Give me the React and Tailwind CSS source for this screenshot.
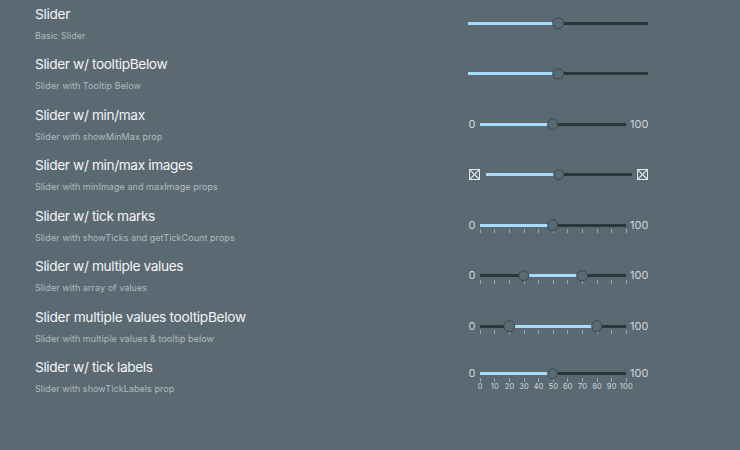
import React from "react";

const TICKS = [0, 10, 20, 30, 40, 50, 60, 70, 80, 90, 100];

const ROWS = [
  { title: "Slider", note: "Basic Slider", values: [50] },
  { title: "Slider w/ tooltipBelow", note: "Slider with Tooltip Below", values: [50], tight: true },
  { title: "Slider w/ min/max", note: "Slider with showMinMax prop", values: [50], ends: "text", tight: true },
  { title: "Slider w/ min/max images", note: "Slider with minImage and maxImage props", values: [50], ends: "image", tight: true },
  { title: "Slider w/ tick marks", note: "Slider with showTicks and getTickCount props", values: [50], ends: "text", ticks: true, tight: true },
  { title: "Slider w/ multiple values", note: "Slider with array of values", values: [30, 70], ends: "text", ticks: true, tight: true },
  { title: "Slider multiple values tooltipBelow", note: "Slider with multiple values & tooltip below", values: [20, 80], ends: "text", ticks: true },
  { title: "Slider w/ tick labels", note: "Slider with showTickLabels prop", values: [50], ends: "text", ticks: true, labels: true, tight: true },
];

function BoxIcon() {
  return (
    <svg className="block h-[11px] w-[11px] shrink-0" viewBox="0 0 11 11" fill="none" stroke="#e3e6e8" strokeWidth="1.1">
      <rect x="0.5" y="0.5" width="10" height="10" />
      <path d="M1 1 10 10M10 1 1 10" />
    </svg>
  );
}

function Track({ values, ticks, labels }) {
  const start = values.length > 1 ? values[0] : 0;
  const end = values[values.length - 1];
  return (
    <div className="relative h-[3px] min-w-0 flex-1 bg-[#2b363b]">
      <div className="h-full bg-[#a5dcfd]" style={{ marginLeft: `${start}%`, width: `${end - start}%` }} />
      {ticks &&
        TICKS.map((t) => (
          <div key={t} className="absolute top-[5.4px] ml-[0.4px] flex w-5 -translate-x-1/2 flex-col items-center" style={{ left: `${t}%` }}>
            <span className="h-[4px] w-px bg-[#9ea6ab]" />
            {labels && <span className="text-[7.5px] leading-[9px] tracking-[0.15px] text-[#d4d7da]">{t}</span>}
          </div>
        ))}
      {values.map((v) => (
        <span
          key={v}
          className="absolute top-1/2 h-[11.5px] w-[11.5px] -translate-x-1/2 -translate-y-1/2 rounded-full border border-[#3a464e] bg-[#5b6973]"
          style={{ left: `${v}%` }}
        />
      ))}
    </div>
  );
}

function Slider({ values, ends, ticks, labels }) {
  return (
    <div className="flex w-[180px] items-center text-[11px] leading-none text-[#d2d5d8]">
      {ends === "text" && <span className="w-[11.5px]">0</span>}
      {ends === "image" && <span className="w-[17.2px] pl-[0.5px]"><BoxIcon /></span>}
      <Track values={values} ticks={ticks} labels={labels} />
      {ends === "text" && <span className="flex w-[22.5px] justify-end">100</span>}
      {ends === "image" && <span className="flex w-[16.5px] justify-end"><BoxIcon /></span>}
    </div>
  );
}

export default function App() {
  return (
    <main className="h-[450px] w-[740px] overflow-hidden bg-[#5b6973] font-['Inter',sans-serif]">
      <div className="-mt-[2px] ml-[35px] w-[613.4px]">
        {ROWS.map((row) => (
          <section key={row.title} className="flex h-[50.5px] items-center justify-between">
            <div className="pt-[0.6px]">
              <h2 className={`text-[13.7px] leading-[20px] text-[#f3f4f5] ${row.tight ? "tracking-[-0.38px]" : "tracking-[-0.3px]"}`}>
                {row.title}
              </h2>
              <p className="mt-[4px] text-[9px] leading-[16px] tracking-[0.06px] text-[#b3babe]">{row.note}</p>
            </div>
            <div className={row.labels ? "pb-[6px]" : ""}>
              <Slider {...row} />
            </div>
          </section>
        ))}
      </div>
    </main>
  );
}
